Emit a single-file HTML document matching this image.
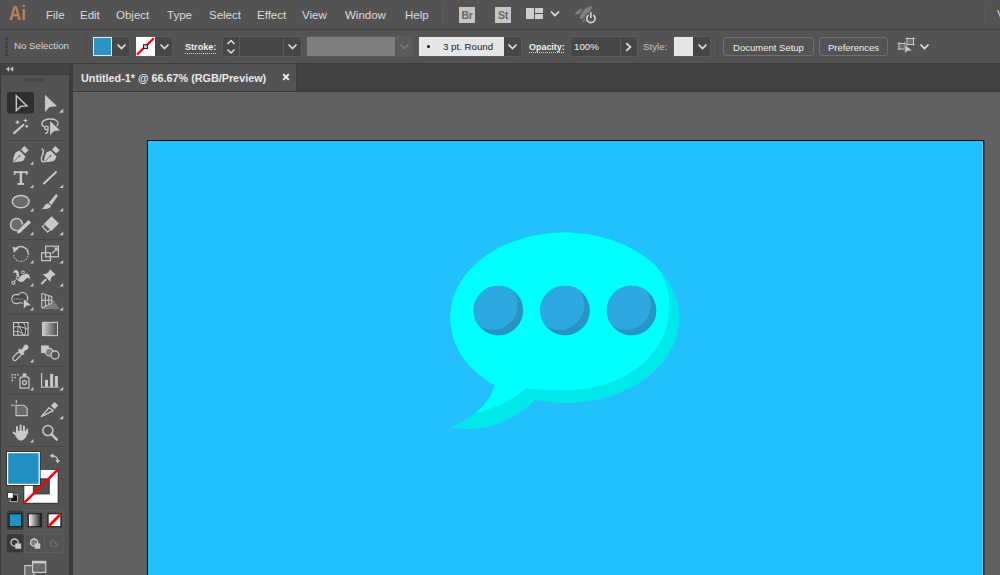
<!DOCTYPE html>
<html><head><meta charset="utf-8">
<style>
*{margin:0;padding:0;box-sizing:border-box}
html,body{width:1000px;height:575px;overflow:hidden;background:#535353;font-family:"Liberation Sans",sans-serif;position:relative}
.a{position:absolute}
.menu{position:absolute;top:8px;font-size:11.5px;color:#dcdcdc;white-space:nowrap;line-height:14px}
.lbl{position:absolute;font-size:9.7px;color:#d6d6d6;white-space:nowrap;line-height:12px}
.box{position:absolute;background:#464646;border:1px solid #5c5c5c;border-radius:3px}
.chev{position:absolute;width:7px;height:7px;border-right:1.6px solid #e0e0e0;border-bottom:1.6px solid #e0e0e0;transform:rotate(45deg)}
.sw{position:absolute;border:1px solid #e8e8e8}
.btn{position:absolute;border:1px solid #6e6e6e;border-radius:3px;font-size:9.5px;color:#f0f0f0;text-align:center;line-height:19px;white-space:nowrap}
.tri{position:absolute;width:0;height:0;border-left:4px solid transparent;border-bottom:4px solid #d0d0d0}
.sep{position:absolute;height:1px;background:#474747;left:6px;width:58px}
</style></head><body>
<!-- menu bar -->
<div class="a" style="left:0;top:0;width:1000px;height:29px;background:#535353"></div>
<div class="a" style="left:0;top:29px;width:1000px;height:1px;background:#434343"></div>
<div class="a" style="left:9px;top:1px;font-size:21px;color:#bf835a;font-weight:bold;line-height:24px;transform:scaleX(0.8);transform-origin:0 0">Ai</div>
<div class="menu" style="left:46px">File</div>
<div class="menu" style="left:80px">Edit</div>
<div class="menu" style="left:116px">Object</div>
<div class="menu" style="left:167px">Type</div>
<div class="menu" style="left:209px">Select</div>
<div class="menu" style="left:257px">Effect</div>
<div class="menu" style="left:302px">View</div>
<div class="menu" style="left:345px">Window</div>
<div class="menu" style="left:405px">Help</div>
<div class="a" style="left:443px;top:5px;width:1px;height:19px;background:#5e5e5e"></div>
<div class="a" style="left:459px;top:7px;width:16px;height:16px;background:#c6c6c6;color:#666;font-weight:bold;font-size:10.5px;line-height:16px;text-align:center;letter-spacing:-0.3px">Br</div>
<div class="a" style="left:495px;top:7px;width:16px;height:16px;background:#c6c6c6;color:#666;font-weight:bold;font-size:10.5px;line-height:16px;text-align:center;letter-spacing:-0.3px">St</div>
<div class="a" style="left:526px;top:8px;width:8px;height:11px;background:#cdcdcd"></div>
<div class="a" style="left:535px;top:8px;width:8px;height:5px;background:#cdcdcd"></div>
<div class="a" style="left:535px;top:14px;width:8px;height:5px;background:#cdcdcd"></div>
<svg class="a" style="left:549px;top:9px" width="12" height="9"><path d="M2 2.5 L6 6.5 L10 2.5" fill="none" stroke="#e0e0e0" stroke-width="1.7"/></svg>
<svg class="a" style="left:565px;top:0px" width="40" height="28">
 <path d="M14.6 17.8 C15.8 12.5 20.5 7.2 27 5.8 C26.5 11.5 22 16.5 16.5 19.2 Z" fill="#808080"/>
 <path d="M9.8 14.6 C11 11.2 14 9 17.6 8.8 C16.5 10.5 15.6 12 14.9 13.8 C13 14.1 11.5 14.3 9.8 14.6 Z" fill="#808080"/>
 <path d="M17.8 22.6 C17.5 20.8 18.4 19 20.6 18 C21.2 19.6 20.5 21.5 17.8 22.6 Z" fill="#808080"/>
 <circle cx="25.9" cy="18.3" r="6.3" fill="#535353"/>
 <path d="M23.6 15 A4.2 4.2 0 1 0 28.2 15" fill="none" stroke="#d0d0d0" stroke-width="1.7"/>
 <line x1="25.9" y1="12.2" x2="25.9" y2="18" stroke="#d0d0d0" stroke-width="1.7"/>
</svg>
<div class="a" style="left:985px;top:5px;width:1px;height:19px;background:#5e5e5e"></div>
<div class="menu" style="left:997px;top:7px">V</div>

<!-- control bar -->
<div class="a" style="left:0;top:30px;width:1000px;height:33px;background:#535353"></div>
<div class="a" style="left:0;top:63px;width:1000px;height:1px;background:#3e3e3e"></div>
<div class="a" style="left:5px;top:37px;width:3px;height:19px;background:repeating-linear-gradient(#3a3a3a 0 1px,transparent 1px 2px)"></div>
<div class="lbl" style="left:14px;top:40px">No Selection</div>
<div class="a" style="left:86px;top:34px;width:1px;height:24px;background:#4a4a4a"></div>
<!-- fill -->
<div class="box" style="left:93px;top:36px;width:37px;height:21px"></div>
<div class="sw" style="left:93px;top:37px;width:19px;height:19px;background:#2a94c8"></div>
<svg class="a" style="left:116px;top:41px" width="12" height="10"><path d="M1.5 3.5 L5.5 7.5 L9.5 3.5" fill="none" stroke="#e0e0e0" stroke-width="1.7"/></svg>
<!-- stroke -->
<div class="box" style="left:136px;top:36px;width:37px;height:21px"></div>
<div class="a" style="left:136px;top:37px;width:19px;height:19px;background:#fff;overflow:hidden">
 <svg width="19" height="19" style="position:absolute;left:0;top:0"><line x1="1" y1="17.6" x2="17.8" y2="1.2" stroke="#f00" stroke-width="2.2"/><rect x="7.5" y="7.8" width="4" height="3.8" fill="#c8c8c8" stroke="#111" stroke-width="0.9"/></svg>
</div>
<svg class="a" style="left:159px;top:41px" width="12" height="10"><path d="M1.5 3.5 L5.5 7.5 L9.5 3.5" fill="none" stroke="#e0e0e0" stroke-width="1.7"/></svg>
<div class="lbl" style="left:185px;top:41px;color:#f0f0f0;font-weight:bold;font-size:9.1px">Stroke:</div>
<div class="a" style="left:185px;top:53px;width:31px;height:1px;background:repeating-linear-gradient(90deg,#cfcfcf 0 1px,transparent 1px 2px)"></div>
<div class="box" style="left:222px;top:36px;width:80px;height:21px"></div>
<div class="a" style="left:239px;top:37px;width:1px;height:19px;background:#5c5c5c"></div>
<div class="a" style="left:283px;top:37px;width:1px;height:19px;background:#5c5c5c"></div>
<svg class="a" style="left:224px;top:38px" width="14" height="18"><path d="M3.5 6 L7 2.5 L10.5 6 M3.5 11.5 L7 15 L10.5 11.5" fill="none" stroke="#e0e0e0" stroke-width="1.5"/></svg>
<svg class="a" style="left:287px;top:41px" width="12" height="10"><path d="M1.5 3.5 L5.5 7.5 L9.5 3.5" fill="none" stroke="#e0e0e0" stroke-width="1.7"/></svg>
<!-- variable width -->
<div class="a" style="left:306px;top:36px;width:107px;height:21px;background:#5a5a5a;border-radius:2px"></div>
<div class="a" style="left:307px;top:37px;width:88px;height:19px;background:#7f7f7f"></div>
<svg class="a" style="left:399px;top:41px" width="12" height="10"><path d="M1.5 3.5 L5.5 7.5 L9.5 3.5" fill="none" stroke="#7a7a7a" stroke-width="1.7"/></svg>
<!-- brush -->
<div class="box" style="left:418px;top:36px;width:104px;height:21px"></div>
<div class="a" style="left:419px;top:37px;width:85px;height:19px;background:#e6e6e6"></div>
<div class="a" style="left:427px;top:45px;width:3px;height:3px;background:#111;border-radius:50%"></div>
<div class="lbl" style="left:443px;top:41px;color:#1a1a1a">3 pt. Round</div>
<svg class="a" style="left:507px;top:41px" width="12" height="10"><path d="M1.5 3.5 L5.5 7.5 L9.5 3.5" fill="none" stroke="#e0e0e0" stroke-width="1.7"/></svg>
<!-- opacity -->
<div class="lbl" style="left:529px;top:41px;color:#f0f0f0;font-weight:bold;font-size:8.95px">Opacity:</div>
<div class="a" style="left:529px;top:52px;width:36px;height:1px;background:repeating-linear-gradient(90deg,#cfcfcf 0 1px,transparent 1px 2px)"></div>
<div class="box" style="left:570px;top:36px;width:68px;height:21px"></div>
<div class="a" style="left:620px;top:37px;width:1px;height:19px;background:#5c5c5c"></div>
<div class="lbl" style="left:574px;top:41px;color:#f0f0f0">100%</div>
<svg class="a" style="left:623px;top:41px" width="10" height="12"><path d="M3.2 2.2 L7.4 6 L3.2 9.8" fill="none" stroke="#e0e0e0" stroke-width="1.7"/></svg>
<!-- style -->
<div class="lbl" style="left:643px;top:41px;color:#c4c4c4">Style:</div>
<div class="box" style="left:673px;top:36px;width:38px;height:21px"></div>
<div class="a" style="left:674px;top:37px;width:19px;height:19px;background:#e6e6e6"></div>
<svg class="a" style="left:697px;top:41px" width="12" height="10"><path d="M1.5 3.5 L5.5 7.5 L9.5 3.5" fill="none" stroke="#e0e0e0" stroke-width="1.7"/></svg>
<div class="a" style="left:717px;top:35px;width:1px;height:23px;background:#4a4a4a"></div>
<div class="btn" style="left:723px;top:37px;width:91px;height:19px">Document Setup</div>
<div class="btn" style="left:819px;top:37px;width:69px;height:19px">Preferences</div>
<svg class="a" style="left:897px;top:36px" width="20" height="20">
 <rect x="2" y="7.5" width="5.5" height="5.5" fill="#6a6a6a"/>
 <rect x="10" y="2.5" width="6.5" height="6" fill="#6a6a6a"/>
 <path d="M0.8 7.5 H8.8 M0.8 13 H8.8 M2 6.3 V14.2 M7.5 6.3 V14.2 M8.8 2.5 H17.7 M8.8 8.5 H17.7 M10 1.3 V9.7 M16.5 1.3 V9.7" stroke="#c8c8c8" stroke-width="1" fill="none"/>
 <path d="M7.8 8.4 L7.8 17.8 L10.2 15.2 L15.6 14.8 Z" fill="#c8c8c8" stroke="#535353" stroke-width="0.8"/>
</svg>
<svg class="a" style="left:919px;top:41px" width="12" height="10"><path d="M1.5 3.5 L5.5 7.5 L9.5 3.5" fill="none" stroke="#e0e0e0" stroke-width="1.7"/></svg>

<!-- tab bar -->
<div class="a" style="left:73px;top:64px;width:927px;height:27px;background:#424242"></div>
<div class="a" style="left:73px;top:64px;width:223px;height:27px;background:#535353"></div>
<div class="a" style="left:73px;top:91px;width:927px;height:1px;background:#3a3a3a"></div>
<div class="a" style="left:296px;top:64px;width:1px;height:27px;background:#3c3c3c"></div>

<div class="a" style="left:81px;top:72px;font-size:10.8px;font-weight:bold;color:#e8e8e8;white-space:nowrap;line-height:12px">Untitled-1* @ 66.67% (RGB/Preview)</div>
<svg class="a" style="left:282px;top:73px" width="8" height="8"><path d="M1.2 1.2 L6.8 6.8 M6.8 1.2 L1.2 6.8" stroke="#f2f2f2" stroke-width="1.9"/></svg>
<!-- canvas -->
<div class="a" style="left:73px;top:92px;width:927px;height:483px;background:#616161"></div>
<div class="a" style="left:148px;top:141px;width:837px;height:440px;background:#3f3f3f"></div>
<div class="a" style="left:147px;top:140px;width:837px;height:440px;background:#22c0ff;border:1px solid #111"></div>
<div class="a" style="left:982px;top:141px;width:1px;height:440px;background:#4fd0ff"></div>

<svg class="a" style="left:0;top:0" width="1000" height="575">
<defs>
 <path id="bub" d="M564.5 232.5 C627.5 232.5 679.3 270.6 679.3 317.5 C679.3 365.5 629 403 564.5 403 C554 402.5 544 401.5 535.3 400 C514 420 486 433.5 451.3 427.5 C470 419 490 405 494.6 385 C466 369.5 450.5 344.5 450.5 317.5 C450.5 270.6 501.5 232.5 564.5 232.5 Z"/>
 <clipPath id="bc"><use href="#bub"/></clipPath>
 <path id="bubL" d="M555.5 220.5 C618.5 220.5 669.5 258.6 669.5 305.5 C669.5 354 626 390.5 562 390.5 C549 390.5 536 389.5 526.3 388 C505 406 476 418 442.3 415 C461 407 481 393 485.6 373 C457 357.5 441.5 332.5 441.5 305.5 C441.5 258.6 492.5 220.5 555.5 220.5 Z"/>
 <circle id="dot" r="24.8" cx="0" cy="0"/>
 <clipPath id="dc"><use href="#dot"/></clipPath>
</defs>
<use href="#bub" fill="#00e8ea"/>
<g clip-path="url(#bc)"><use href="#bubL" fill="#00ffff"/><rect x="440" y="225" width="60" height="161" fill="#00ffff"/></g>
<g transform="translate(498.4,310.5)"><use href="#dot" fill="#2595c8"/><g clip-path="url(#dc)"><use href="#dot" fill="#2ea8e0" transform="translate(-5.5,-5.5)"/></g></g>
<g transform="translate(565,310.5)"><use href="#dot" fill="#2595c8"/><g clip-path="url(#dc)"><use href="#dot" fill="#2ea8e0" transform="translate(-5.5,-5.5)"/></g></g>
<g transform="translate(631.6,310.5)"><use href="#dot" fill="#2595c8"/><g clip-path="url(#dc)"><use href="#dot" fill="#2ea8e0" transform="translate(-5.5,-5.5)"/></g></g>
</svg>
<!-- toolbar -->
<div class="a" style="left:0;top:64px;width:73px;height:511px;background:#3c3c3c"></div>
<div class="a" style="left:1px;top:64px;width:69px;height:10px;background:#434343"></div>
<div class="a" style="left:1px;top:75px;width:68px;height:500px;background:#535353"></div>

<svg class="a" style="left:0;top:0" width="72" height="575" viewBox="0 0 72 575">
<g fill="#c9c9c9" stroke="none">
 <!-- collapse arrows -->
 <path d="M6 69 L9.2 66.5 L9.2 71.7 Z M10 69 L13.2 66.5 L13.2 71.7 Z"/>
</g>
<!-- grip -->
<g fill="#3e3e3e"><rect x="25" y="78" width="1" height="4"/><rect x="27" y="78" width="1" height="4"/><rect x="29" y="78" width="1" height="4"/><rect x="31" y="78" width="1" height="4"/><rect x="33" y="78" width="1" height="4"/><rect x="35" y="78" width="1" height="4"/><rect x="37" y="78" width="1" height="4"/><rect x="39" y="78" width="1" height="4"/><rect x="41" y="78" width="1" height="4"/><rect x="43" y="78" width="1" height="4"/></g>
<!-- selection highlight -->
<rect x="7" y="92" width="27" height="21.5" rx="2.5" fill="#2f2f2f"/>
<!-- separators -->
<g fill="#474747"><rect x="6" y="140" width="58" height="1"/><rect x="6" y="239" width="58" height="1"/><rect x="6" y="314" width="58" height="1"/><rect x="6" y="366" width="58" height="1"/><rect x="6" y="394" width="58" height="1"/><rect x="6" y="446" width="58" height="1"/></g>
<!-- subtool triangles -->
<g fill="#c9c9c9">
 <path d="M59 112.8 L63.2 112.8 L63.2 108.8 Z"/>
 <path d="M30 164.8 L33.4 164.8 L33.4 161.2 Z"/>
 <path d="M30 188 L33.4 188 L33.4 184.4 Z"/>
 <path d="M59.4 188 L63.2 188 L63.2 184.4 Z"/>
 <path d="M30 211.6 L33.4 211.6 L33.4 208 Z"/>
 <path d="M59.4 211.6 L63.2 211.6 L63.2 208 Z"/>
 <path d="M30 235.2 L33.4 235.2 L33.4 231.6 Z"/>
 <path d="M59.4 235.2 L63.2 235.2 L63.2 231.6 Z"/>
 <path d="M30 263.6 L33.4 263.6 L33.4 260 Z"/>
 <path d="M59.4 263.6 L63.2 263.6 L63.2 260 Z"/>
 <path d="M30 286.6 L33.4 286.6 L33.4 283 Z"/>
 <path d="M59.4 286.6 L63.2 286.6 L63.2 283 Z"/>
 <path d="M30 310.6 L33.4 310.6 L33.4 307 Z"/>
 <path d="M59.4 310.6 L63.2 310.6 L63.2 307 Z"/>
 <path d="M30 362.4 L33.4 362.4 L33.4 358.8 Z"/>
 <path d="M30 390.4 L33.4 390.4 L33.4 386.8 Z"/>
 <path d="M59.4 390.4 L63.2 390.4 L63.2 386.8 Z"/>
 <path d="M59.4 419.2 L63.2 419.2 L63.2 415.6 Z"/>
 <path d="M30 442.6 L33.4 442.6 L33.4 439 Z"/>
</g>
<g fill="none" stroke="#c9c9c9" stroke-width="1.4" stroke-linejoin="miter">
 <!-- selection -->
 <path d="M16.3 95.6 L16.3 110.6 L21 106.3 L27 106 Z"/>
</g>
<g fill="#c9c9c9">
 <!-- direct selection -->
 <path d="M45 94.8 L45 111.9 L49.6 106.9 L57 106.3 Z"/>
 <!-- magic wand -->
 <path d="M12.6 133 L23.4 123.6 L24.8 125 L14.2 134.6 Z"/>
 <path d="M17.5 119.6 L18.3 121.4 L20.1 122.2 L18.3 123 L17.5 124.8 L16.7 123 L14.9 122.2 L16.7 121.4 Z"/>
 <path d="M25.5 118.2 L26.2 119.8 L27.8 120.5 L26.2 121.2 L25.5 122.8 L24.8 121.2 L23.2 120.5 L24.8 119.8 Z"/>
 <path d="M26.8 124.6 L28.4 126.3 L26.8 128 L25.2 126.3 Z"/>
</g>
<!-- lasso -->
<g fill="none" stroke="#c9c9c9" stroke-width="1.3">
 <path d="M44.6 126.6 C42.5 126.4 41.6 125 42 123.2 C42.8 120.5 46.5 119 50.5 119 C55 119 58.2 121 58 123.5 C57.9 124.8 57.3 125.6 56.5 126.2"/>
 <circle cx="46.4" cy="127.9" r="1.8"/>
 <path d="M47.8 129.2 C48.4 131 47.6 133 45 133.6"/>
</g>
<path d="M49.3 119.5 L49.3 136.6 L54.5 132 L61.6 131.3 Z" fill="#535353"/>
<path d="M50.1 121.1 L50.1 134.9 L54.1 131.1 L59.9 130.5 Z" fill="#c9c9c9"/>
<!-- pen -->
<g fill="#c9c9c9">
 <path d="M21 149.4 L24.4 146 L28.6 150.2 L25.2 153.6 Z"/>
 <path d="M13 162.3 C13.3 158 14 154.5 15.8 152.2 L19.6 150.6 L25.4 156.4 L23.8 160.2 C21.5 161.8 17.5 162 13 162.3 Z"/>
 <path d="M52 149.4 L55.4 146 L59.6 150.2 L56.2 153.6 Z"/>
 <path d="M44 162.3 C44.3 158 45 154.5 46.8 152.2 L50.6 150.6 L56.4 156.4 L54.8 160.2 C52.5 161.8 48.5 162 44 162.3 Z"/>
</g>
<g stroke="#535353" stroke-width="0.8" fill="none"><path d="M13.8 161.5 L18.8 156.5"/><path d="M44.8 161.5 L49.8 156.5"/></g>
<g fill="#535353"><circle cx="19.4" cy="155.9" r="0.9"/><circle cx="50.4" cy="155.9" r="0.9"/></g>
<path d="M41.6 148.5 C44.5 150 43.5 153 42 156 C40.5 159.5 41.5 162.5 44.5 161.5" fill="none" stroke="#c9c9c9" stroke-width="1.4"/>
<!-- type T -->
<g fill="#c9c9c9">
 <rect x="13.8" y="171.3" width="13.8" height="1.8"/>
 <rect x="13.8" y="171.3" width="1.6" height="3.6"/>
 <rect x="26" y="171.3" width="1.6" height="3.6"/>
 <rect x="19.7" y="171.3" width="2.4" height="13"/>
 <rect x="17.5" y="183" width="6.6" height="1.9"/>
</g>
<!-- line -->
<path d="M43.4 184 L56.6 171.6" stroke="#c9c9c9" stroke-width="2" fill="none"/>
<!-- ellipse -->
<ellipse cx="20.7" cy="201.6" rx="8.4" ry="6.2" fill="#6b6b6b" stroke="#c9c9c9" stroke-width="1.5"/>
<!-- brush -->
<g fill="#c9c9c9">
 <path d="M55.8 194.2 C57.5 193.8 57.8 195.2 57.3 196.5 L51.5 205 L48.8 202.8 Z"/>
 <path d="M48.2 203.4 L51 205.8 C50.5 208 48 209.5 42 209 C44 207.5 44.5 205.5 45.5 204.5 C46.3 203.7 47.3 203.3 48.2 203.4 Z"/>
</g>
<!-- shaper -->
<path d="M22.5 224.5 A6 6 0 1 0 17 230.5" fill="#6b6b6b" stroke="#c9c9c9" stroke-width="1.4"/>
<path d="M28.5 220 L31 222.5 L20 233 L17 233.6 L17.6 230.6 Z" fill="#c9c9c9"/>
<!-- eraser -->
<path d="M51.6 216.3 L58.9 223.5 L51.3 231 L44 223.8 Z" fill="#c9c9c9"/>
<path d="M44.4 224.6 L42.5 226.6 L47.6 232 L49.8 230" fill="none" stroke="#c9c9c9" stroke-width="1.3"/>
<!-- rotate -->
<g fill="none" stroke="#c9c9c9" stroke-width="1.5">
 <path d="M15.5 249 A7.3 7.3 0 0 1 28.2 253.8"/>
 <path d="M28.2 253.8 A7.3 7.3 0 0 1 13.6 254.5" stroke-dasharray="1.3 1.3" stroke-width="1.2"/>
</g>
<path d="M12.6 246.8 L18.8 248.3 L13.8 252.8 Z" fill="#c9c9c9"/>
<!-- scale -->
<g fill="none" stroke="#c9c9c9" stroke-width="1.2">
 <rect x="45.6" y="246.2" width="12.8" height="10.6"/>
 <rect x="41.6" y="252.8" width="8.8" height="7.8"/>
 <path d="M52 253.5 L56.5 249"/>
</g>
<path d="M57.6 247.6 L57.6 251.6 L53.6 247.6 Z" fill="#c9c9c9"/>
<!-- warp / puppet -->
<path d="M13.2 273.4 C13.4 270.8 15 269.8 16.3 270 C17.9 270.3 18.8 271.8 18.8 273.6 L19 275.8 C20 275.3 21 275 22.2 274.9 C24 274.6 25.8 273.1 27.2 273.5 C29 274.1 30.1 276.4 29.8 279.4 C28.8 278.6 28 277.6 26.9 277.9 C25.6 279 24.2 281.6 21.2 281.9 C18.6 282.1 17 280.3 16.9 278.3 L16.4 273.4 C16 272.4 15 272.3 13.2 273.4 Z" fill="#c9c9c9"/>
<circle cx="17.8" cy="277.8" r="1.9" fill="#535353"/>
<circle cx="17.8" cy="277.8" r="1.4" fill="none" stroke="#c9c9c9" stroke-width="0.9"/>
<path d="M19.2 276.4 L22.2 273.4" stroke="#535353" stroke-width="1.6"/>
<ellipse cx="23" cy="272.3" rx="1.7" ry="1.2" fill="#535353" stroke="#c9c9c9" stroke-width="0.9"/>
<path d="M14.6 281.2 L16.4 279.3" stroke="#c9c9c9" stroke-width="1"/>
<rect x="12.1" y="281.4" width="2.6" height="2.6" fill="#535353" stroke="#c9c9c9" stroke-width="1"/>
<!-- pin -->
<path d="M50.1 269.2 L55.7 274.8 C54 275.3 52.6 276 51.6 277 C50.8 278.4 50.4 280 50.5 281.9 L42.7 274.1 C44.6 274.2 46.2 273.8 47.3 273 C48.8 271.8 49.6 270.6 50.1 269.2 Z" fill="#c9c9c9"/>
<path d="M45.6 279.8 L41.8 283.4" stroke="#c9c9c9" stroke-width="2" stroke-linecap="round"/>
<!-- shape builder -->
<g stroke="#c9c9c9" stroke-width="1.3" fill="none"><circle cx="16.4" cy="299" r="4.5"/><circle cx="22.4" cy="297.9" r="5.3"/></g>
<g fill="#535353"><circle cx="16.4" cy="299" r="3.85"/><circle cx="22.4" cy="297.9" r="4.65"/></g>
<circle cx="16.6" cy="299" r="2.9" fill="#474747"/>
<circle cx="22" cy="298.4" r="3.4" fill="#474747"/>
<g fill="#b0b0b0"><rect x="14" y="298.4" width="1.2" height="1.2"/><rect x="16.2" y="298.4" width="1.2" height="1.2"/><rect x="18.4" y="298.4" width="1.2" height="1.2"/><rect x="20.6" y="298.4" width="1.2" height="1.2"/></g>
<path d="M23 297.8 L23 310 L26.6 306.4 L32.2 305.9 Z" fill="#535353"/><path d="M23.8 299.2 L23.8 308.4 L26.4 305.7 L30.9 305.2 Z" fill="#c9c9c9"/>
<!-- perspective grid -->
<g fill="none" stroke="#c9c9c9" stroke-width="1.1">
 <path d="M41.8 293.2 L41.8 308 M41.8 293.2 L51.8 296.6 L51.8 303.2 L41.8 308 M45.4 294.4 L45.4 306.2 M48.8 295.6 L48.8 304.6 M41.8 300.4 L51.8 300"/>
</g>
<g fill="#a8a8a8"><rect x="52" y="301.4" width="3" height="1"/><rect x="50" y="303.6" width="6.5" height="1"/><rect x="46" y="305.6" width="11.5" height="1"/><rect x="42" y="307.6" width="16.8" height="1"/></g>
<!-- mesh -->
<rect x="13.6" y="322.6" width="14.4" height="12.6" fill="#404040" stroke="#c9c9c9" stroke-width="1.2"/>
<g fill="none" stroke="#c9c9c9" stroke-width="1">
 <path d="M17.4 322.6 C19.5 326 21 330 23.2 335.2"/>
 <path d="M23.4 322.6 C26 326 26.2 331 24.5 335.2"/>
 <path d="M13.6 327.4 C17 325.5 23 327 28 329.5"/>
 <path d="M13.6 332 C17 330.5 21 331.5 23.5 335.2"/>
 <path d="M18.3 326.3 C17.6 329.5 17.6 332.5 18 335.2"/>
</g>
<!-- gradient -->
<defs><linearGradient id="gr" x1="0" x2="1"><stop offset="0" stop-color="#cfcfcf"/><stop offset="1" stop-color="#4a4a4a"/></linearGradient>
<linearGradient id="gr2" x1="0" x2="1"><stop offset="0" stop-color="#ffffff"/><stop offset="1" stop-color="#222"/></linearGradient></defs>
<rect x="42.5" y="322.4" width="15" height="13.2" fill="url(#gr)" stroke="#c9c9c9" stroke-width="1.1"/>
<!-- eyedropper -->
<g transform="translate(19.6,353.6) rotate(45)">
 <rect x="-2.1" y="-1.2" width="4.2" height="10" rx="2.1" fill="none" stroke="#c9c9c9" stroke-width="1.25"/>
 <rect x="-3.6" y="-3.6" width="7.2" height="2.6" rx="0.8" fill="#c9c9c9"/>
 <rect x="-1.8" y="-7" width="3.6" height="4" fill="#c9c9c9"/>
 <circle cx="0" cy="-9" r="2.6" fill="#c9c9c9"/>
</g>
<!-- blend -->
<rect x="41.1" y="345.4" width="7.7" height="7.7" fill="#c9c9c9"/>
<circle cx="49.3" cy="352.2" r="3.8" fill="#7a7a7a" stroke="#c9c9c9" stroke-width="1.2"/>
<circle cx="55" cy="355" r="4" fill="#535353" stroke="#c9c9c9" stroke-width="1.3"/>
<!-- symbol sprayer -->
<g fill="#c9c9c9"><rect x="11.6" y="374" width="1.5" height="1.5"/><rect x="14.4" y="374" width="1.5" height="1.5"/><rect x="17.2" y="374" width="1.5" height="1.5"/><rect x="11.6" y="376.8" width="1.5" height="1.5"/><rect x="14.4" y="376.8" width="1.5" height="1.5"/><rect x="11.6" y="379.6" width="1.5" height="1.5"/>
<rect x="22.6" y="373.4" width="3.8" height="3"/></g>
<g fill="none" stroke="#c9c9c9" stroke-width="1.2">
 <path d="M20 388.2 L20 379 C20 377.5 21 376.8 22.5 376.8 L26.5 376.8 C28 376.8 29 377.5 29 379 L29 388.2 Z"/>
 <circle cx="24.5" cy="382.6" r="2"/>
</g>
<!-- column graph -->
<g fill="#c9c9c9">
 <rect x="41" y="373" width="1.2" height="14.6"/><rect x="41" y="386.6" width="17.8" height="1"/>
 <rect x="45" y="379.8" width="3" height="7"/><rect x="50.1" y="373.9" width="3" height="12.9"/><rect x="54.9" y="376" width="3" height="10.8"/>
</g>
<!-- artboard -->
<g fill="none" stroke="#c9c9c9" stroke-width="1.1">
 <path d="M10.8 405.3 L14.9 405.3 M16.3 400 L16.3 403.6"/>
 <path d="M16 405.2 L24 405.2 L27.2 408.4 L27.2 415.6 L16 415.6 Z" fill="#6b6b6b"/>
</g>
<!-- knife/slice -->
<path d="M41.2 416.6 L49 407.8 L53.2 410.6 Z" fill="none" stroke="#c9c9c9" stroke-width="1.3" stroke-linejoin="round"/>
<path d="M51 405.6 L54.6 402 L58.2 405.6 L54.6 409.2 Z" fill="#c9c9c9"/>
<!-- hand -->
<g fill="#c9c9c9" stroke="#c9c9c9" stroke-linecap="round">
 <path d="M17 436 L17 427" stroke-width="2"/>
 <path d="M20.6 432 L20.6 425.6" stroke-width="2"/>
 <path d="M23.9 432 L23.9 426.6" stroke-width="2"/>
 <path d="M27.2 433 L27.2 429.4" stroke-width="1.8"/>
 <path d="M13.6 432.6 L18 436" stroke-width="2"/>
 <path d="M17 431 L27.6 431 L26.5 435.5 C25 439 23 440.2 20.6 440.2 C18.5 440.2 17 438.5 16 436.5 Z" stroke-width="0.6"/>
</g>
<!-- zoom -->
<circle cx="47.9" cy="430.6" r="5" fill="none" stroke="#c9c9c9" stroke-width="1.5"/>
<path d="M51.4 434.2 L56.8 439.6" stroke="#c9c9c9" stroke-width="2.4" stroke-linecap="round"/>
<!-- fill / stroke big -->
<rect x="23.5" y="469" width="35" height="34.6" fill="#2a2a2a"/>
<rect x="24.3" y="469.8" width="33.4" height="33" fill="#ffffff"/>
<rect x="33.4" y="478.9" width="15.8" height="15" fill="#4f4f4f" stroke="#333" stroke-width="1"/>
<path d="M24.5 502.6 L57.6 469.8" stroke="#ff0000" stroke-width="2.6"/>
<rect x="6.2" y="451.2" width="34.4" height="34.6" fill="#2a2a2a"/>
<rect x="7" y="452" width="32.8" height="33" fill="#ffffff"/>
<rect x="8.2" y="453.2" width="30.4" height="30.6" fill="#2190c2"/>
<!-- swap -->
<g fill="none" stroke="#c9c9c9" stroke-width="1.4"><path d="M52 455.8 C55 455.8 57.7 457.5 57.7 460.8"/></g>
<g fill="#c9c9c9"><path d="M49.6 455.8 L53.2 453.4 L53.2 458.2 Z"/><path d="M55.3 460 L60.1 460 L57.7 463.4 Z"/></g>
<!-- default -->
<rect x="10.2" y="494.8" width="7.3" height="6.8" fill="#111" stroke="#c9c9c9" stroke-width="0.8"/>
<rect x="7.4" y="492.4" width="5.8" height="5.8" fill="#fff" stroke="#222" stroke-width="0.8"/>
<!-- color mode row -->
<rect x="6.7" y="510.5" width="57.2" height="19.5" rx="2" fill="none" stroke="#5d5d5d" stroke-width="1"/>
<rect x="6.7" y="510.5" width="17" height="19.5" rx="2" fill="#3a3a3a"/>
<rect x="44" y="511" width="1" height="18.5" fill="#5d5d5d"/><rect x="23.8" y="511" width="1" height="18.5" fill="#5d5d5d"/>
<rect x="9.1" y="513.8" width="12.6" height="12.9" fill="#2190c2" stroke="#111" stroke-width="1"/>
<rect x="28.3" y="513.8" width="12.9" height="12.9" fill="url(#gr2)" stroke="#111" stroke-width="1"/>
<rect x="48.1" y="513.8" width="12.8" height="12.9" fill="#fff" stroke="#111" stroke-width="1"/>
<path d="M49.2 525.8 L60 514.8" stroke="#ff0000" stroke-width="2.8"/>
<!-- draw mode row -->
<rect x="6.7" y="534.2" width="57.2" height="18.3" rx="2" fill="none" stroke="#5d5d5d" stroke-width="1"/>
<rect x="6.7" y="534.2" width="17" height="18.3" rx="2" fill="#383838"/>
<rect x="44" y="534.6" width="1" height="17.6" fill="#5d5d5d"/><rect x="23.8" y="534.6" width="1" height="17.6" fill="#5d5d5d"/>
<circle cx="14.6" cy="542.6" r="3.6" fill="none" stroke="#c9c9c9" stroke-width="1.3"/>
<rect x="15.2" y="543.4" width="6" height="5.4" fill="#c9c9c9"/>
<circle cx="34.1" cy="542.6" r="3.6" fill="#7a7a7a" stroke="#c9c9c9" stroke-width="1.3"/>
<rect x="34.7" y="543.4" width="5.6" height="5.4" fill="#c9c9c9"/>
<path d="M57.4 543.6 A3.4 3.4 0 1 1 54 540.2" fill="none" stroke="#6e6e6e" stroke-width="1.2"/>
<path d="M54 543.6 L57.4 543.6 L54 540.2 Z" fill="#6e6e6e"/>
<!-- screen mode -->
<rect x="24.8" y="565.6" width="9" height="10" fill="#6b6b6b" stroke="#c9c9c9" stroke-width="1.2"/>
<rect x="32.6" y="561.4" width="13.2" height="11" fill="#6b6b6b" stroke="#c9c9c9" stroke-width="1.2"/>
<rect x="32.6" y="561.4" width="13.2" height="2" fill="#c9c9c9"/>
</svg>
</body></html>
